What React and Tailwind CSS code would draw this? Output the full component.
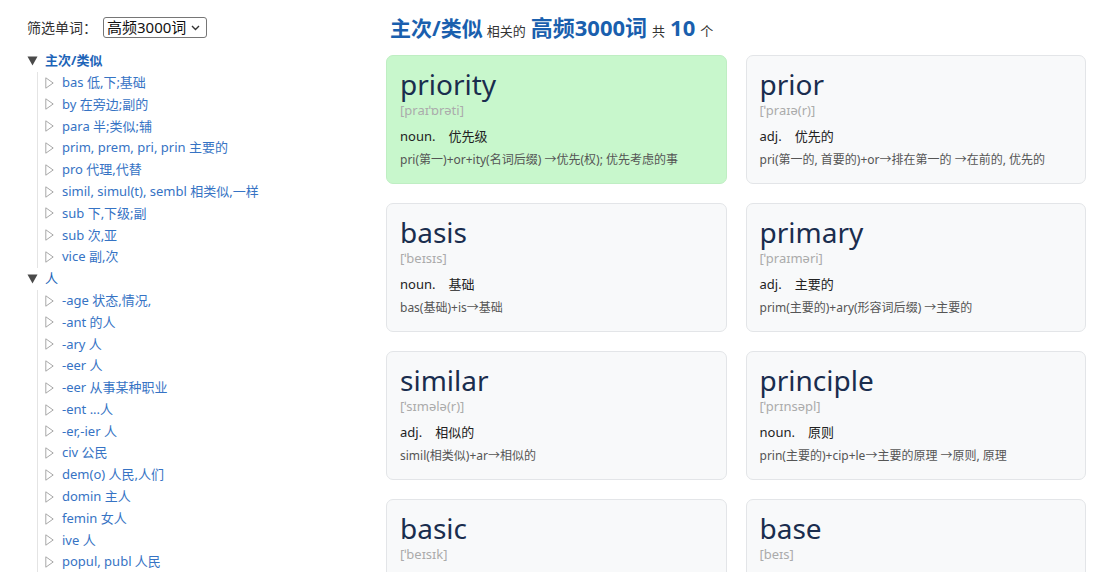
import React from 'react';

const groups = [
    {
        name: '主次/类似',
        active: true,
        items: [
            'bas 低,下;基础',
            'by 在旁边;副的',
            'para 半;类似;辅',
            'prim, prem, pri, prin 主要的',
            'pro 代理,代替',
            'simil, simul(t), sembl 相类似,一样',
            'sub 下,下级;副',
            'sub 次,亚',
            'vice 副,次',
        ],
    },
    {
        name: '人',
        active: false,
        items: [
            '-age 状态,情况,',
            '-ant 的人',
            '-ary 人',
            '-eer 人',
            '-eer 从事某种职业',
            '-ent ...人',
            '-er,-ier 人',
            'civ 公民',
            'dem(o) 人民,人们',
            'domin 主人',
            'femin 女人',
            'ive 人',
            'popul, publ 人民',
        ],
    },
];

const words = [
    { word: 'priority', ph: '[praɪˈɒrəti]', pos: 'noun.', mean: '优先级', etym: 'pri(第一)+or+ity(名词后缀) →优先(权); 优先考虑的事', hot: true },
    { word: 'prior', ph: '[ˈpraɪə(r)]', pos: 'adj.', mean: '优先的', etym: 'pri(第一的, 首要的)+or→排在第一的 →在前的, 优先的' },
    { word: 'basis', ph: '[ˈbeɪsɪs]', pos: 'noun.', mean: '基础', etym: 'bas(基础)+is→基础' },
    { word: 'primary', ph: '[ˈpraɪməri]', pos: 'adj.', mean: '主要的', etym: 'prim(主要的)+ary(形容词后缀) →主要的' },
    { word: 'similar', ph: '[ˈsɪmələ(r)]', pos: 'adj.', mean: '相似的', etym: 'simil(相类似)+ar→相似的' },
    { word: 'principle', ph: '[ˈprɪnsəpl]', pos: 'noun.', mean: '原则', etym: 'prin(主要的)+cip+le→主要的原理 →原则, 原理' },
    { word: 'basic', ph: '[ˈbeɪsɪk]', pos: 'adj.', mean: '基本的', etym: 'bas(基础)+ic→基础的, 基本的' },
    { word: 'base', ph: '[beɪs]', pos: 'noun.', mean: '基础', etym: 'bas(基础)+e→基础, 底部' },
];

const font = { fontFamily: '"Noto Sans", "Noto Sans CJK SC", sans-serif' };

const Down = () => (
    <svg width="11" height="10" viewBox="0 0 11 10" className="shrink-0">
        <path d="M0.5 0.5 L10.5 0.5 L5.5 9.5 Z" fill="#4a4a4a" />
    </svg>
);

const Right = () => (
    <svg width="9" height="12" viewBox="0 0 9 12" className="shrink-0">
        <path d="M0.8 0.8 L8.2 6 L0.8 11.2 Z" fill="none" stroke="#a8a8a8" strokeWidth="1" />
    </svg>
);

const Sidebar = () => (
    <aside className="w-[386px] shrink-0 pl-[27px] pt-[17px]">
        {/* Filter */}
        <div className="flex items-center h-[21px]">
            <span className="text-[14px] text-[#333]">筛选单词：</span>
            <div className="ml-[6px] w-[104px] h-[21px] border border-[#767676] rounded-[3px] flex items-center justify-between pl-[3px] pr-[6px] bg-white">
                <span className="text-[15px] text-[#111] leading-none">高频3000词</span>
                <svg width="9" height="6" viewBox="0 0 9 6">
                    <path d="M1 1 L4.5 4.5 L8 1" fill="none" stroke="#333" strokeWidth="1.4" />
                </svg>
            </div>
        </div>

        {/* Tree */}
        <div className="mt-[12px]">
            {groups.map((g) => (
                <div key={g.name}>
                    <div className="flex items-center h-[21.8px]">
                        <Down />
                        <span className={`ml-[7px] text-[13px] text-[#1d64b8] ${g.active ? 'font-bold' : ''}`}>{g.name}</span>
                    </div>
                    <ul className="ml-[10px] border-l border-[#e4e4e4] pl-[7px]">
                        {g.items.map((it) => (
                            <li key={it} className="flex items-center h-[21.8px]">
                                <Right />
                                <span className="ml-[8px] text-[13px] text-[#3673c4] whitespace-nowrap">{it}</span>
                            </li>
                        ))}
                    </ul>
                </div>
            ))}
        </div>
    </aside>
);

const Card = ({ w }) => (
    <div className={`rounded-[7px] border ${w.hot ? 'bg-[#c8f7cc] border-[#bfeec3]' : 'bg-[#f8f9fa] border-[#e3e5e8]'} pl-[13px] pr-[13px] pt-[11px] pb-[13px] h-[129px]`}>
        <div className="text-[28px] leading-[34px] text-[#1a2d4e]">{w.word}</div>
        <div className="text-[13px] leading-[18px] text-[#ababab]">{w.ph}</div>
        <div className="mt-[8px] text-[13px] leading-[18px] text-[#222] flex">
            <span>{w.pos}</span>
            <span className="ml-[13px]">{w.mean}</span>
        </div>
        <div className="mt-[6px] text-[12px] leading-[18px] text-[#555] whitespace-nowrap">{w.etym}</div>
    </div>
);

export default function App() {
    return (
        <div className="flex bg-white min-h-screen" style={font}>
            <Sidebar />
            <main className="flex-1 pr-[14px] pt-[11px]">
                <h1 className="flex items-baseline pl-[4px] text-[#1a5fae] whitespace-nowrap">
                    <span className="text-[21px] font-bold">主次/类似</span>
                    <span className="ml-[4px] text-[13px] text-[#333]">相关的</span>
                    <span className="ml-[5px] text-[22px] font-bold">高频3000词</span>
                    <span className="ml-[5px] text-[13px] text-[#333]">共</span>
                    <span className="ml-[5px] text-[22px] font-bold">10</span>
                    <span className="ml-[5px] text-[13px] text-[#333]">个</span>
                </h1>
                <div className="mt-[10px] grid grid-cols-2 gap-x-[19px] gap-y-[19px]">
                    {words.map((w) => (
                        <Card key={w.word} w={w} />
                    ))}
                </div>
            </main>
        </div>
    );
}
